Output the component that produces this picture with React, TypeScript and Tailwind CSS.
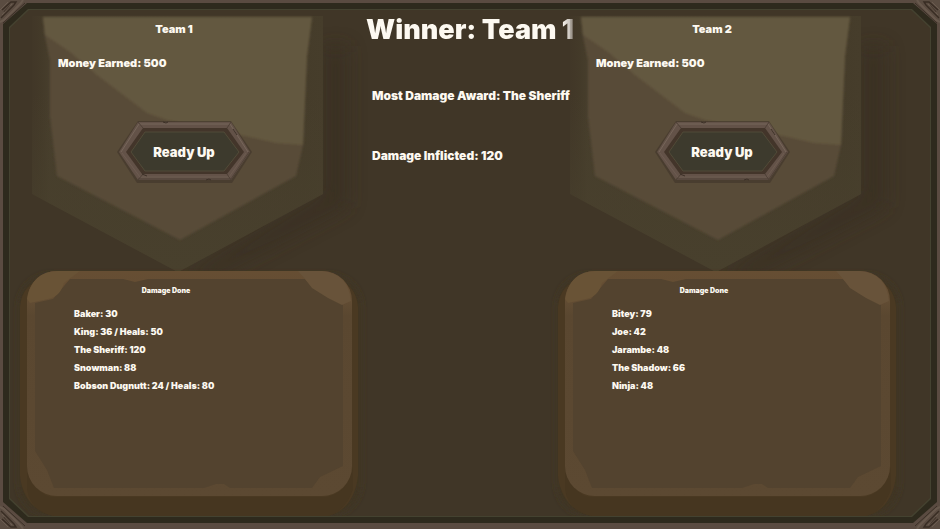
import clsx from 'clsx';

type Team = {
  name: string;
  money: number;
  damage: string[];
};

const teams: Team[] = [
  {
    name: 'Team 1',
    money: 500,
    damage: [
      'Baker: 30',
      'King: 36 / Heals: 50',
      'The Sheriff: 120',
      'Snowman: 88',
      'Bobson Dugnutt: 24 / Heals: 80',
    ],
  },
  {
    name: 'Team 2',
    money: 500,
    damage: ['Bitey: 79', 'Joe: 42', 'Jarambe: 48', 'The Shadow: 66', 'Ninja: 48'],
  },
];

// Carved stone ornament, drawn for the top left corner and flipped for the others
const Corner = ({ className }: { className: string }) => (
  <svg viewBox="0 0 28 26" className={clsx('pointer-events-none absolute h-[26px] w-7', className)} aria-hidden="true">
    <path d="M0 0H27L24 3L4 22L0 25Z" fill="#5a4c41" />
    <path d="M0 22L4 20L21 3L23 0" fill="none" stroke="#68594d" strokeWidth="2" />
    <path d="M3 23L25 3" stroke="#3c3027" strokeWidth="1" />
    <path d="M1 18L14 5L16 2H11L2 10M4 12L10 6" fill="none" stroke="#382c23" strokeWidth="1.4" />
    <path d="M2 15L12 4M0 10L8 2" fill="none" stroke="#6b5c50" strokeWidth="1" />
  </svg>
);

const BannerArt = ({ id }: { id: string }) => (
  <svg
    viewBox="0 0 338 255"
    preserveAspectRatio="none"
    className="pointer-events-none absolute inset-0 h-full w-full overflow-visible"
    aria-hidden="true"
  >
    <defs>
      <linearGradient id={`${id}-edge`} x1="0" x2="1" y1="0" y2="0">
        <stop offset="0" stopColor="#453b2a" stopOpacity="0.2" />
        <stop offset="0.03" stopColor="#453c2a" stopOpacity="0.6" />
        <stop offset="0.06" stopColor="#473e2c" />
        <stop offset="0.93" stopColor="#453c2a" />
        <stop offset="1" stopColor="#463d2b" />
      </linearGradient>
      <linearGradient id={`${id}-tip`} x1="0" x2="0" y1="0" y2="1">
        <stop offset="0.3" stopColor="#48402d" stopOpacity="0" />
        <stop offset="1" stopColor="#48402d" />
      </linearGradient>
      <filter id={`${id}-soft`} x="-20%" y="-20%" width="140%" height="140%">
        <feGaussianBlur stdDeviation="9" />
      </filter>
      <filter id={`${id}-blend`}>
        <feGaussianBlur stdDeviation="1" />
      </filter>
    </defs>
    <path d="M303 30H328V190L190 262H165L303 178Z" fill="#392e21" opacity="0.6" filter={`url(#${id}-soft)`} />
    <path d="M12 0H303V178L158 256L12 178Z" fill={`url(#${id}-edge)`} />
    <path d="M12 0H303V178L158 256L12 178Z" fill={`url(#${id}-tip)`} />
    <g filter={`url(#${id}-blend)`}>
      <path d="M23 1H292L287 40L283 129L276 160L160 224L37 160L30 100V44L25 20Z" fill="#584b39" />
      <path d="M23 1H292L287 40L283 129L256 127L230 121L147 104L127 97L77 59L50 36L25 19Z" fill="#64583f" />
    </g>
  </svg>
);

const SlabArt = ({ id }: { id: string }) => (
  <svg
    viewBox="0 0 338 245"
    preserveAspectRatio="none"
    className="pointer-events-none absolute inset-0 h-full w-full overflow-visible"
    aria-hidden="true"
  >
    <defs>
      <linearGradient id={`${id}-rim`} x1="0" x2="0" y1="0" y2="1">
        <stop offset="0" stopColor="#664e33" />
        <stop offset="0.12" stopColor="#634d34" />
        <stop offset="0.2" stopColor="#5a4730" />
        <stop offset="1" stopColor="#5c4932" />
      </linearGradient>
      <filter id={`${id}-soft`}>
        <feGaussianBlur stdDeviation="3" />
      </filter>
    </defs>
    <rect x="-1" y="4" width="342" height="240" rx="32" fill="#3f3423" filter={`url(#${id}-soft)`} />
    <path d="M0 36Q2 12 26 7H312Q336 12 338 36V205Q334 238 308 245H34Q4 238 0 205Z" fill="#4a3922" />
    <path d="M7 190Q14 226 34 226H306Q328 222 333 196V218Q326 240 308 245H34Q10 240 7 218Z" fill="#463620" />
    <rect x="7" y="0" width="325" height="225" rx="30" fill={`url(#${id}-rim)`} />
    <path
      d="M50 8H103L115 11L128 8H285Q290 14 297 17L308 24L323 33V195L300 206L292 217H210L204 213H196L184 217H34L27 199L15 180V32L33 28L44 15Z"
      fill="#53432f"
    />
    <path d="M7 28Q12 0 38 0H60L44 12Q40 26 28 28L10 32Z" fill="#695336" />
    <path d="M285 8L278 0H302Q328 2 331 30L322 34L308 27L292 17Z" fill="#68533a" />
  </svg>
);

const ReadyButton = () => (
  <button type="button" className="relative mx-auto block h-[61px] w-[133px] cursor-pointer pt-px text-[13px] leading-[18px]">
    <svg viewBox="0 0 133 61" className="absolute inset-0 h-full w-full overflow-visible" aria-hidden="true">
      <path d="M-1 31L20 0H113L134 31L114 62H19Z" fill="#40342a" opacity="0.6" />
      <path d="M1 31L20 1H113L132 31L113 59H20Z" fill="#635248" />
      <path d="M3 31L21 3H112L130 31" fill="none" stroke="#76665a" strokeWidth="1" />
      <path d="M20 58H113L131 31" fill="none" stroke="#4f4137" strokeWidth="1" />
      <path d="M4 32L22 56H111L128 32" fill="none" stroke="#6d5c50" strokeWidth="1" />
      <path d="M20 1L25 7M113 1L109 7M20 59L25 53M113 59L109 53" stroke="#4e4036" strokeWidth="1" />
      <path d="M8 31L25 7H109L126 31L109 53H24Z" fill="#43352a" />
      <path d="M13 31L27 11H106L121 31L106 50H27Z" fill="#3d3a2d" stroke="#514b38" strokeWidth="1" />
      <path d="M45 1L48 2L50 1M88 59L91 58L93 59M115 8L119 14M24 53L29 55" fill="none" stroke="#3c3027" strokeWidth="1" />
    </svg>
    <span className="relative">Ready Up</span>
  </button>
);

const TeamPanel = ({ team, id }: { team: Team; id: string }) => (
  <section className="flex flex-col">
    <div className="relative h-[255px] pr-[10px]">
      <BannerArt id={`${id}-banner`} />
      <div className="relative">
        <h2 className="pt-1 pr-5 text-center text-[11px] leading-[18px]">{team.name}</h2>
        <p className="pt-4 pl-[38px] text-[11px] leading-[18px]">Money Earned: {team.money}</p>
        <div className="pt-[49px]">
          <ReadyButton />
        </div>
      </div>
    </div>
    <div className="relative min-h-[245px] flex-1">
      <SlabArt id={`${id}-slab`} />
      <div className="relative">
        <h3 className="pt-[11px] pr-[46px] text-center text-[7px] leading-[18px]">Damage Done</h3>
        <ul className="pt-[5px] pl-[54px] text-[9px] leading-[18px]">
          {team.damage.map((line) => (
            <li key={line}>{line}</li>
          ))}
        </ul>
      </div>
    </div>
  </section>
);

export default function App() {
  return (
    <main className="relative flex min-h-screen flex-col bg-[#5a4b41] px-[3px] pt-[3px] pb-[6px] font-['Inter',sans-serif] font-black text-[#fdf9f1]">
      {/* Frame: dark band, thin green line, board */}
      <div className="flex flex-1 flex-col bg-[#2e2a1d] p-[6px] [clip-path:polygon(24px_0,calc(100%_-_24px)_0,100%_21px,100%_calc(100%_-_21px),calc(100%_-_24px)_100%,24px_100%,0_calc(100%_-_21px),0_21px)]">
        <div className="flex flex-1 flex-col bg-[#444230] p-px [clip-path:polygon(19px_0,calc(100%_-_19px)_0,100%_18px,100%_calc(100%_-_18px),calc(100%_-_19px)_100%,19px_100%,0_calc(100%_-_18px),0_18px)]">
          <div className="grid flex-1 grid-cols-[minmax(0,169fr)_minmax(0,100fr)_minmax(0,169fr)] bg-[#403627] pt-[6px] pr-[34px] pl-[10px] [clip-path:polygon(19px_0,calc(100%_-_19px)_0,100%_18px,100%_calc(100%_-_18px),calc(100%_-_19px)_100%,19px_100%,0_calc(100%_-_18px),0_18px)]">
            <TeamPanel team={teams[0]} id="one" />
            <section className="pl-2 whitespace-nowrap">
              <h1 className="w-max bg-linear-to-r from-[#fdf9f1] from-94% to-[#b3aca6] bg-clip-text text-[27px] leading-[28px] text-transparent">
                Winner: {teams[0].name}
              </h1>
              <div className="pt-[43px] pl-[6px] text-[12px] leading-[18px]">
                <p>Most Damage Award: The Sheriff</p>
                <p className="pt-[42px]">Damage Inflicted: 120</p>
              </div>
            </section>
            <TeamPanel team={teams[1]} id="two" />
          </div>
        </div>
      </div>
      <Corner className="top-0 left-0" />
      <Corner className="top-0 right-0 -scale-x-100" />
      <Corner className="bottom-0 left-0 -scale-y-100" />
      <Corner className="right-0 bottom-0 -scale-100" />
    </main>
  );
}
